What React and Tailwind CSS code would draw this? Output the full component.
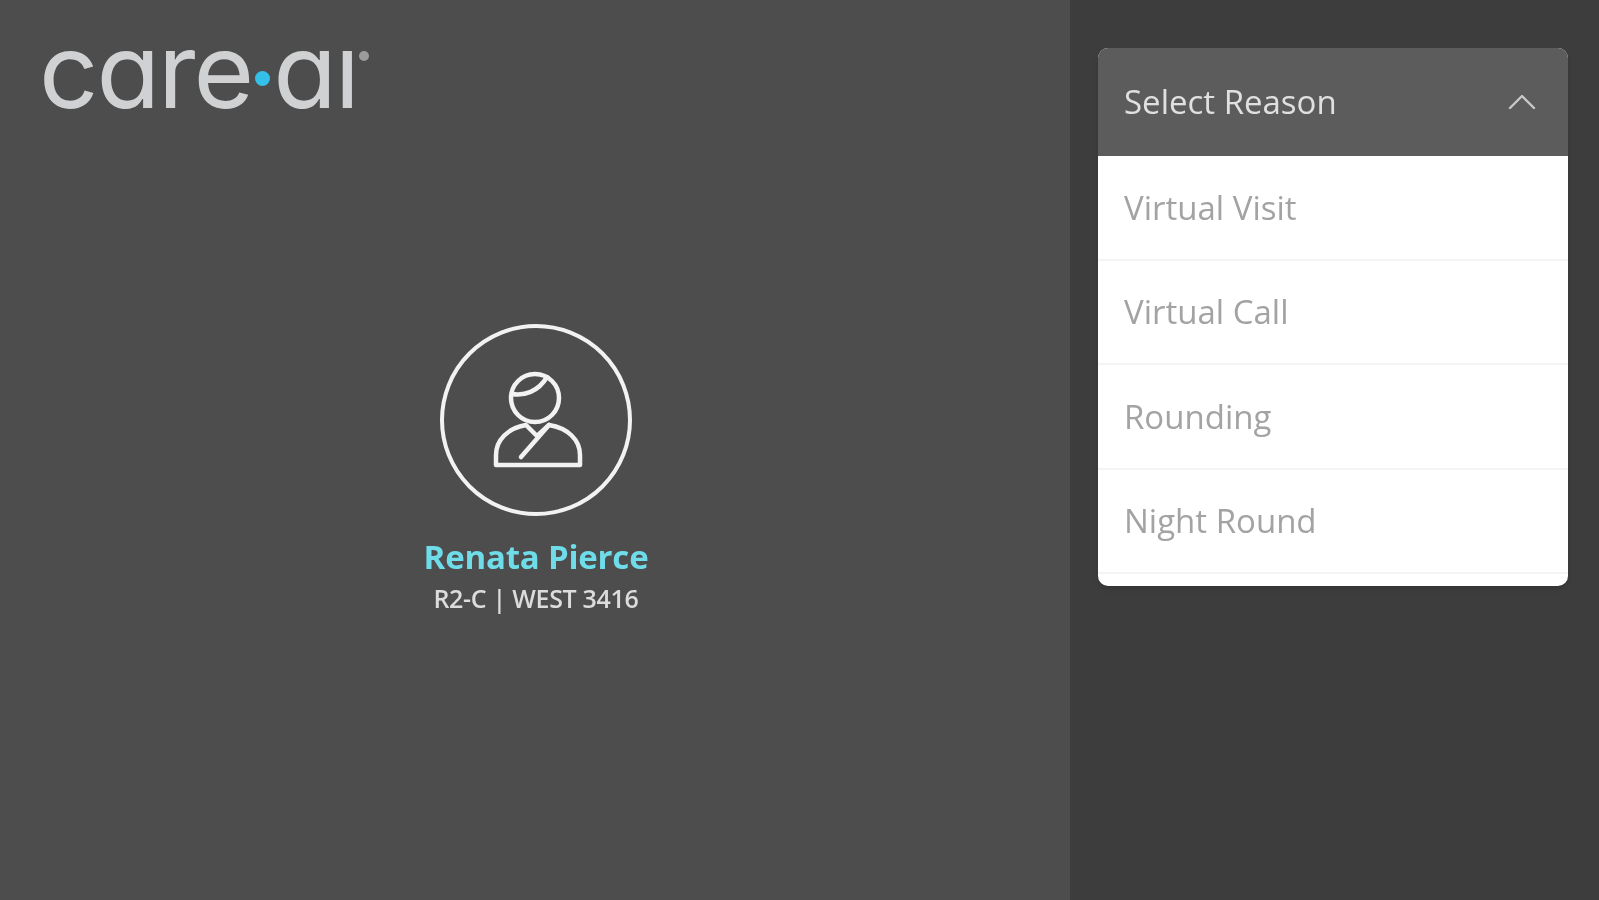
import { ChevronUp } from 'lucide-react';

const reasons = ['Virtual Visit', 'Virtual Call', 'Rounding', 'Night Round'];

function Logo() {
    return (
        <div className="flex items-center h-[60px] text-[#cfd1d2] font-['Inter',sans-serif] font-normal text-[104px] leading-none [font-feature-settings:'cv11'] tracking-[-2px]">
            <span>care</span>
            <span className="w-[15px] h-[15px] rounded-full bg-[#35c0ea] mx-[3px] mt-[16px] shrink-0" />
            <span>aı</span>
            <span className="w-[10px] h-[10px] rounded-full bg-[#9a9c9d] self-start mt-[11px] ml-[1px] shrink-0" />
        </div>
    );
}

function PatientIcon() {
    return (
        <svg width="192" height="192" viewBox="0 0 192 192" fill="none" stroke="#f2f2f2" strokeWidth="4">
            <circle cx="96" cy="96" r="94" />
            <g strokeLinecap="round" strokeLinejoin="round" strokeWidth="4.5">
                <circle cx="95" cy="74" r="24" />
                <path d="M72 70c12 2 26-2 35-17" />
                <path d="M56 141v-10c0-15 12-27 30-30l11 11 12-11c19 3 31 15 31 30v10z" />
                <path d="M109 101L81 133" />
            </g>
        </svg>
    );
}

function App() {
    return (
        <div className="flex h-[900px] w-full font-['Open_Sans',sans-serif] overflow-hidden blur-[0.6px]">
            {/* Main area */}
            <div className="w-[1070px] shrink-0 bg-[#4d4d4d] pt-[40px] pl-[39px]">
                <Logo />
                <div className="mt-[224px] ml-[-37px] flex flex-col items-center">
                    <PatientIcon />
                    <p className="mt-[23px] text-[#6fdcea] text-[33px] leading-[36px] font-bold tracking-[-0.2px]">Renata Pierce</p>
                    <p className="mt-[8px] text-[#dcdcdc] text-[25px] leading-[30px] font-semibold tracking-[-0.3px]">R2-C | WEST 3416</p>
                </div>
            </div>

            {/* Reason panel */}
            <div className="flex-1 bg-[#3d3d3d] pt-[48px] pl-[28px] pr-[31px]">
                <div className="rounded-[10px] overflow-hidden bg-white shadow-md">
                    <div className="h-[108px] bg-[#5c5c5c] flex items-center justify-between pl-[26px] pr-[22px] text-[#e0e0e0] text-[33px]">
                        <span>Select Reason</span>
                        <ChevronUp className="w-[48px] h-[48px] text-[#c8c8c8]" strokeWidth={1.2} />
                    </div>
                    <div className="pb-[12px]">
                        {reasons.map((reason) => (
                            <div
                                key={reason}
                                className="h-[104.5px] flex items-center pl-[26px] text-[#a3a3a3] text-[33px] border-b-2 border-[#f4f4f4]"
                            >
                                {reason}
                            </div>
                        ))}
                    </div>
                </div>
            </div>
        </div>
    );
}

export default App;
